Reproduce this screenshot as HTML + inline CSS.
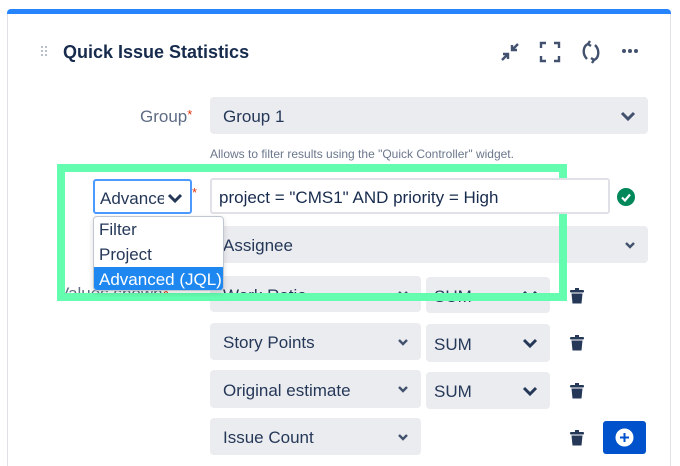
<!DOCTYPE html>
<html><head><meta charset="utf-8"><style>
*{box-sizing:border-box;margin:0;padding:0}
html,body{width:680px;height:466px;overflow:hidden}
body{background:#fff;font-family:"Liberation Sans",sans-serif;color:#253858;position:relative}
.a{position:absolute}
.sel{position:absolute;background:#ebecf0;border-radius:4px;font-size:17px;color:#253858;padding:3px 0 0 13px;display:flex;align-items:center}
.chev{position:absolute;right:12px;top:50%;transform:translateY(-50%)}
.trash{position:absolute}
</style></head><body>
<div class="a" style="left:7px;top:9px;width:664px;height:457px;border:1px solid #dfe1e6;border-top:none;border-bottom:none;border-radius:5px 5px 0 0"></div>
<div class="a" style="left:7px;top:9px;width:664px;height:5px;background:#2684ff;border-radius:4px 4px 0 0"></div>
<svg class="a" style="left:40px;top:45px" width="8" height="12"><g fill="#a5adba"><circle cx="2" cy="2" r="1"/><circle cx="6" cy="2" r="1"/><circle cx="2" cy="6" r="1"/><circle cx="6" cy="6" r="1"/><circle cx="2" cy="10" r="1"/><circle cx="6" cy="10" r="1"/></g></svg>
<div class="a" style="left:63px;top:42px;font-size:18px;font-weight:bold;color:#172b4d">Quick Issue Statistics</div>
<svg class="a" style="left:499px;top:41px" width="22" height="22" fill="none" stroke="#42526e" stroke-width="2.4"><path d="M3 19l6-6M4 13h5v5M19 3l-6 6M13 4v5h5"/></svg>
<svg class="a" style="left:539px;top:41px" width="22" height="22" fill="none" stroke="#42526e" stroke-width="2.4"><path d="M2 7V2h5M15 2h5v5M20 15v5h-5M7 20H2v-5"/></svg>
<svg class="a" style="left:579px;top:40px" width="24" height="24" fill="none" stroke="#42526e" stroke-width="2.4"><path d="M9 4C4 6 3 14 8 19M15 20c5-2 6-10 1-15"/><path d="M11 1l-2 3 3 2M13 23l2-3-3-2"/></svg>
<svg class="a" style="left:621px;top:48px" width="18" height="6" fill="#42526e"><circle cx="3" cy="3" r="2"/><circle cx="9" cy="3" r="2"/><circle cx="15" cy="3" r="2"/></svg>

<div class="a" style="left:140px;top:107px;font-size:17px;color:#5e6c84">Group<span style="color:#de350b;font-size:13px;vertical-align:top">*</span></div>
<div class="sel" style="left:210px;top:97px;width:438px;height:37px">Group 1<svg class="chev" width="16" height="12" fill="none" stroke="#42526e" stroke-width="3"><path d="M2 3l6 6 6-6"/></svg></div>
<div class="a" style="left:210px;top:147px;font-size:12px;color:#6b778c">Allows to filter results using the "Quick Controller" widget.</div>

<div class="a" style="left:58px;top:284px;font-size:17px;color:#5e6c84">Values shown<span style="color:#de350b">*</span></div>
<div class="sel" style="left:210px;top:226px;width:438px;height:37px">Assignee<svg class="chev" width="12" height="8" fill="none" stroke="#42526e" stroke-width="2.4"><path d="M2 2l4 4 4-4"/></svg></div>

<div class="sel" style="left:210px;top:276px;width:211px;height:36px">Work Ratio<svg class="chev" width="12" height="8" fill="none" stroke="#42526e" stroke-width="2.4"><path d="M2 2l4 4 4-4"/></svg></div>
<div class="sel" style="left:426px;top:277px;width:124px;height:36px;padding-left:8px">SUM<svg class="chev" width="16" height="12" fill="none" stroke="#253858" stroke-width="3"><path d="M2 3l6 6 6-6"/></svg></div>
<div class="sel" style="left:210px;top:323px;width:211px;height:37px">Story Points<svg class="chev" width="12" height="8" fill="none" stroke="#42526e" stroke-width="2.4"><path d="M2 2l4 4 4-4"/></svg></div>
<div class="sel" style="left:426px;top:324px;width:124px;height:38px;padding-left:8px">SUM<svg class="chev" width="16" height="12" fill="none" stroke="#253858" stroke-width="3"><path d="M2 3l6 6 6-6"/></svg></div>
<div class="sel" style="left:210px;top:370px;width:211px;height:38px">Original estimate<svg class="chev" width="12" height="8" fill="none" stroke="#42526e" stroke-width="2.4"><path d="M2 2l4 4 4-4"/></svg></div>
<div class="sel" style="left:426px;top:372px;width:124px;height:37px;padding-left:8px">SUM<svg class="chev" width="16" height="12" fill="none" stroke="#253858" stroke-width="3"><path d="M2 3l6 6 6-6"/></svg></div>
<div class="sel" style="left:210px;top:418px;width:211px;height:37px">Issue Count<svg class="chev" width="12" height="8" fill="none" stroke="#42526e" stroke-width="2.4"><path d="M2 2l4 4 4-4"/></svg></div>

<svg class="trash" style="left:570px;top:288px" width="14" height="16" fill="#253858"><rect x="0" y="2" width="14" height="2.5" rx="1"/><rect x="5" y="0" width="4" height="3"/><path d="M1.5 5.5h11l-1 10h-9z"/></svg>
<svg class="trash" style="left:570px;top:335px" width="14" height="16" fill="#253858"><rect x="0" y="2" width="14" height="2.5" rx="1"/><rect x="5" y="0" width="4" height="3"/><path d="M1.5 5.5h11l-1 10h-9z"/></svg>
<svg class="trash" style="left:570px;top:383px" width="14" height="16" fill="#253858"><rect x="0" y="2" width="14" height="2.5" rx="1"/><rect x="5" y="0" width="4" height="3"/><path d="M1.5 5.5h11l-1 10h-9z"/></svg>
<svg class="trash" style="left:570px;top:430px" width="14" height="16" fill="#253858"><rect x="0" y="2" width="14" height="2.5" rx="1"/><rect x="5" y="0" width="4" height="3"/><path d="M1.5 5.5h11l-1 10h-9z"/></svg>
<div class="a" style="left:603px;top:421px;width:43px;height:33px;background:#0052cc;border-radius:3px"></div>
<svg class="a" style="left:615px;top:428px" width="19" height="19"><circle cx="9.5" cy="9.5" r="9" fill="#fff"/><path d="M9.5 5v9M5 9.5h9" stroke="#0052cc" stroke-width="2"/></svg>

<div class="a" style="left:57px;top:164px;width:510px;height:137px;border:8px solid #64fdb0"></div>

<div class="a" style="left:93px;top:179px;width:99px;height:35px;border:2px solid #4c9aff;border-radius:3px;background:#fff;font-size:17px;padding:8px 0 0 5px;overflow:hidden;white-space:nowrap"><span style="display:inline-block;width:64px;overflow:hidden">Advanced</span><svg class="a" style="left:72px;top:11px" width="16" height="12" fill="none" stroke="#253858" stroke-width="3"><path d="M2 3l6 6 6-6"/></svg></div>
<div class="a" style="left:192px;top:185px;color:#de350b;font-size:13px">*</div>
<div class="a" style="left:210px;top:178px;width:400px;height:36px;border:2px solid #dfe1e6;border-radius:3px;background:#fff;font-size:17px;padding:8px 0 0 7px;color:#172b4d">project = "CMS1" AND priority = High</div>
<svg class="a" style="left:617px;top:188px" width="18" height="18"><circle cx="9" cy="9" r="9" fill="#00875a"/><path d="M5 9.5l3 3 5-6" stroke="#fff" stroke-width="2.2" fill="none"/></svg>

<div class="a" style="left:93px;top:216px;width:131px;height:75px;border:1px solid #c1c7d0;border-radius:4px;background:#fff;font-size:17px;overflow:hidden;box-shadow:0 2px 6px rgba(0,0,0,.15)">
<div style="height:25px;padding:3px 0 0 5px">Filter</div>
<div style="height:25px;padding:3px 0 0 5px">Project</div>
<div style="height:25px;padding:3px 0 0 5px;background:#1e88f0;color:#fff">Advanced (JQL)</div>
</div>
</body></html>
